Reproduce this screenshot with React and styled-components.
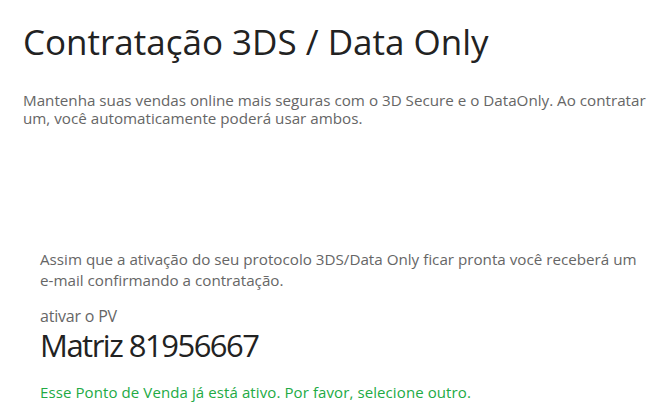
import React from 'react';
import styled, { createGlobalStyle } from 'styled-components';

const Global = createGlobalStyle`
  body {
    margin: 0;
    background: #fff;
    font-family: "Open Sans", "Noto Sans", sans-serif;
  }
`;

const Page = styled.div`
  padding: 20px 10px 0 23px;
`;

const Title = styled.h1`
  margin: 0;
  font-size: 35px;
  font-weight: 400;
  color: #222;
  line-height: 44px;
`;

const Lead = styled.p`
  margin: 27px 0 0 0;
  font-size: 15.2px;
  line-height: 18px;
  color: #666;
`;

const Box = styled.div`
  margin-top: 122px;
  padding: 0 0 0 17px;
`;

const Info = styled.p`
  margin: 0;
  font-size: 15.2px;
  line-height: 21px;
  color: #666;
`;

const Label = styled.div`
  margin-top: 16px;
  font-size: 16px;
  letter-spacing: -0.2px;
  line-height: 18px;
  color: #666;
`;

const Store = styled.div`
  margin-top: 5px;
  font-size: 31px;
  letter-spacing: -1.5px;
  color: #222;
  line-height: 31px;
`;

const Status = styled.div`
  margin-top: 21px;
  font-size: 15px;
  letter-spacing: 0.1px;
  line-height: 20px;
  color: #22aa44;
`;

const NoBreak = styled.span`
  white-space: nowrap;
`;

export default function App() {
  return (
    <>
      <Global />
      <Page>
        <Title>Contratação 3DS / Data Only</Title>
        <Lead>
          Mantenha suas vendas online mais seguras com o 3D Secure e o DataOnly. Ao contratar
          um, você automaticamente poderá usar ambos.
        </Lead>
        <Box>
          <Info>
            Assim que a ativação do seu protocolo 3DS/Data Only ficar pronta você receberá um{' '}
            <NoBreak>e-mail</NoBreak> confirmando a contratação.
          </Info>
          <Label>ativar o PV</Label>
          <Store>Matriz 81956667</Store>
          <Status>Esse Ponto de Venda já está ativo. Por favor, selecione outro.</Status>
        </Box>
      </Page>
    </>
  );
}
